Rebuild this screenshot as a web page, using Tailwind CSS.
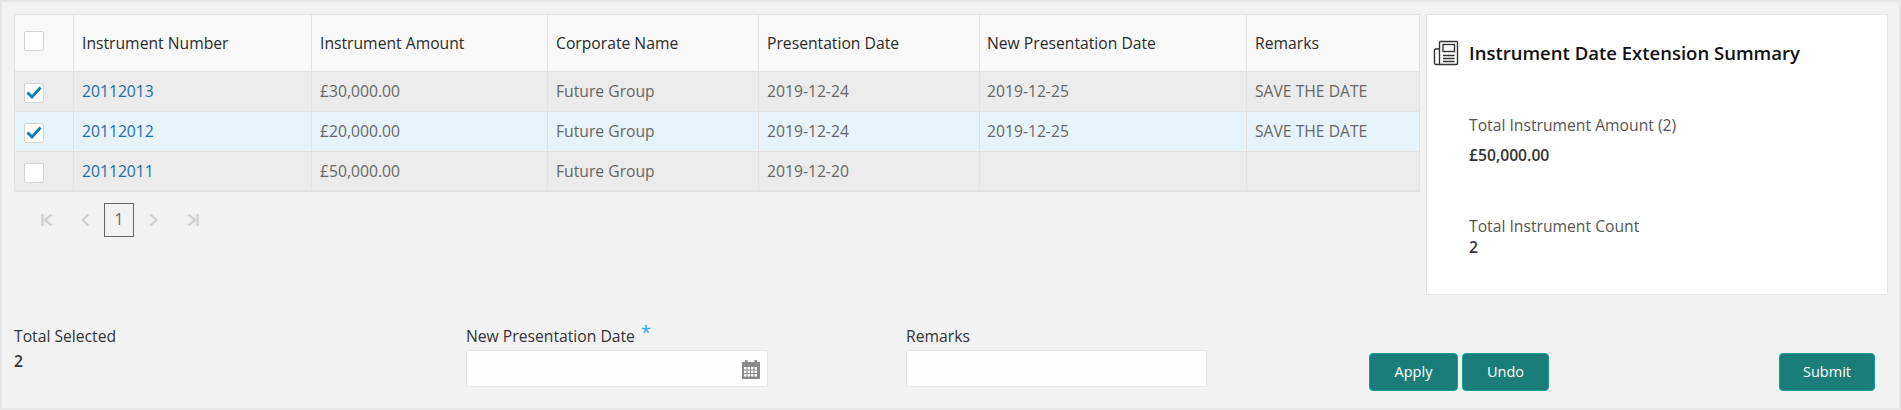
<!DOCTYPE html>
<html lang="en">
<head>
    <meta charset="UTF-8">
    <title>Instrument Date Extension</title>
    <script src="https://cdn.jsdelivr.net/npm/@tailwindcss/browser@4"></script>
</head>
<body class="bg-[#f2f2f2] font-['Open_Sans',sans-serif] text-[15.7px] overflow-hidden">
    <div class="h-[410px] w-[1901px] border-2 border-[#e6e6e6] pl-[12px] pt-[12px] flex flex-col">

        <div class="flex items-start gap-[6px]">
            <div class="w-[1406px]">
                <table class="w-full table-fixed border-collapse border-b-2 border-[#e2e2e2] text-[#666]">
                    <colgroup>
                        <col class="w-[59px]"><col class="w-[238px]"><col class="w-[236px]"><col class="w-[211px]"><col class="w-[221px]"><col class="w-[267px]"><col>
                    </colgroup>
                    <thead class="bg-[#f8f8f8] text-[#2a2a2a]">
                        <tr class="h-[57px]">
                            <th class="border border-[#e2e2e2] pl-[9px] align-top pt-[16px]"><span class="block w-[20px] h-[20px] bg-white border border-[#d4d4d4] rounded-[2px]"></span></th>
                            <th class="border border-[#e2e2e2] pl-[8px] pt-[2px] text-left font-normal">Instrument Number</th>
                            <th class="border border-[#e2e2e2] pl-[8px] pt-[2px] text-left font-normal">Instrument Amount</th>
                            <th class="border border-[#e2e2e2] pl-[8px] pt-[2px] text-left font-normal">Corporate Name</th>
                            <th class="border border-[#e2e2e2] pl-[8px] pt-[2px] text-left font-normal">Presentation Date</th>
                            <th class="border border-[#e2e2e2] pl-[7px] pt-[2px] text-left font-normal">New Presentation Date</th>
                            <th class="border border-[#e2e2e2] pl-[8px] pt-[2px] text-left font-normal">Remarks</th>
                        </tr>
                    </thead>
                    <tbody>
                        <tr class="h-[40px] bg-[#ebebeb]">
                            <td class="border border-[#e2e2e2] pl-[9px] pt-[2px]">
                                <span class="flex items-center justify-center w-[20px] h-[20px] bg-white border border-[#d4d4d4] rounded-[2px]">
                                    <svg width="16" height="13" viewBox="0 0 16 13"><path d="M1.5 6.5 L6 11 L14.5 1.5" fill="none" stroke="#0a7ac4" stroke-width="2.8"/></svg>
                                </span>
                            </td>
                            <td class="border border-[#e2e2e2] pl-[8px] text-[#1c6fa8]">20112013</td>
                            <td class="border border-[#e2e2e2] pl-[8px]">£30,000.00</td>
                            <td class="border border-[#e2e2e2] pl-[8px]">Future Group</td>
                            <td class="border border-[#e2e2e2] pl-[8px]">2019-12-24</td>
                            <td class="border border-[#e2e2e2] pl-[7px]">2019-12-25</td>
                            <td class="border border-[#e2e2e2] pl-[8px]">SAVE THE DATE</td>
                        </tr>
                        <tr class="h-[40px] bg-[#e7f3fa]">
                            <td class="border border-[#e2e2e2] pl-[9px] pt-[2px]">
                                <span class="flex items-center justify-center w-[20px] h-[20px] bg-white border border-[#d4d4d4] rounded-[2px]">
                                    <svg width="16" height="13" viewBox="0 0 16 13"><path d="M1.5 6.5 L6 11 L14.5 1.5" fill="none" stroke="#0a7ac4" stroke-width="2.8"/></svg>
                                </span>
                            </td>
                            <td class="border border-[#e2e2e2] pl-[8px] text-[#1c6fa8]">20112012</td>
                            <td class="border border-[#e2e2e2] pl-[8px]">£20,000.00</td>
                            <td class="border border-[#e2e2e2] pl-[8px]">Future Group</td>
                            <td class="border border-[#e2e2e2] pl-[8px]">2019-12-24</td>
                            <td class="border border-[#e2e2e2] pl-[7px]">2019-12-25</td>
                            <td class="border border-[#e2e2e2] pl-[8px]">SAVE THE DATE</td>
                        </tr>
                        <tr class="h-[39px] bg-[#ebebeb]">
                            <td class="border border-[#e2e2e2] pl-[9px] pt-[4px]">
                                <span class="block w-[20px] h-[20px] bg-white border border-[#d4d4d4] rounded-[2px]"></span>
                            </td>
                            <td class="border border-[#e2e2e2] pl-[8px] pt-[2px] text-[#1c6fa8]">20112011</td>
                            <td class="border border-[#e2e2e2] pl-[8px] pt-[2px]">£50,000.00</td>
                            <td class="border border-[#e2e2e2] pl-[8px] pt-[2px]">Future Group</td>
                            <td class="border border-[#e2e2e2] pl-[8px] pt-[2px]">2019-12-20</td>
                            <td class="border border-[#e2e2e2]"></td>
                            <td class="border border-[#e2e2e2]"></td>
                        </tr>
                    </tbody>
                </table>

                <!-- pagination -->
                <div class="flex items-center mt-[11px] pl-[27px] h-[34px]">
                    <svg width="12" height="12" viewBox="0 0 12 12" fill="none" stroke="#cfcfcf" stroke-width="2.2"><path d="M1.5 0V12M10.5 0.5L4 6L10.5 11.5"/></svg>
                    <svg class="ml-[28px]" width="9" height="12" viewBox="0 0 9 12" fill="none" stroke="#cfcfcf" stroke-width="2.2"><path d="M7.5 0.5L1.5 6L7.5 11.5"/></svg>
                    <span class="ml-[14px] w-[30px] h-[34px] flex items-center justify-center border border-[#666] text-[#666]">1</span>
                    <svg class="ml-[15px]" width="9" height="12" viewBox="0 0 9 12" fill="none" stroke="#cfcfcf" stroke-width="2.2"><path d="M1.5 0.5L7.5 6L1.5 11.5"/></svg>
                    <svg class="ml-[29px]" width="12" height="12" viewBox="0 0 12 12" fill="none" stroke="#cfcfcf" stroke-width="2.2"><path d="M10.5 0V12M1.5 0.5L8 6L1.5 11.5"/></svg>
                </div>
            </div>

            <!-- summary panel -->
            <div class="w-[462px] h-[281px] bg-white border border-[#e4e4e4] pl-[6px] pt-[24px]">
                <div class="flex items-center gap-[10px]">
                    <svg width="26" height="26" viewBox="0 0 26 26" fill="none" stroke="#333" stroke-width="1.4">
                        <path d="M6.5 24.5V2.5a1 1 0 0 1 1-1h16a1 1 0 0 1 1 1v21a1 1 0 0 1-1 1H3a1.5 1.5 0 0 1-1.5-1.5V10a1 1 0 0 1 1-1h4"/>
                        <rect x="10" y="4.5" width="11.5" height="7"/>
                        <path d="M10 15.5h11.5M10 18.5h11.5M10 21.5h11.5" stroke-width="1.6"/>
                    </svg>
                    <span class="font-semibold text-[18.5px] text-[#111]">Instrument Date Extension Summary</span>
                </div>
                <div class="pl-[36px] text-[#555]">
                    <div class="mt-[47px] leading-[22px]">Total Instrument Amount (2)</div>
                    <div class="mt-[8px] leading-[22px] font-semibold text-[#333]">£50,000.00</div>
                    <div class="mt-[49px] leading-[22px]">Total Instrument Count</div>
                    <div class="leading-[20px] font-semibold text-[#333]">2</div>
                </div>
            </div>
        </div>

        <!-- apply row -->
        <div class="flex items-start mt-[29px] text-[#333]">
            <div class="w-[452px] pt-[1px]">
                <div class="leading-[22px]">Total Selected</div>
                <div class="mt-[3px] leading-[22px] font-semibold">2</div>
            </div>
            <div class="w-[302px] mt-[1px]">
                <div class="leading-[22px] h-[25px]">New Presentation Date <span class="text-[#29a9e0] text-[18px] leading-none ml-[2px] relative -top-[3px]">*</span></div>
                <div class="relative h-[37px] bg-[#fdfdfd] border border-[#e6e6e6] rounded-[2px]">
                    <svg class="absolute right-[6px] top-[9px]" width="20" height="20" viewBox="0 0 20 20" fill="#8a8a8a">
                        <rect x="4" y="0" width="2.5" height="4"/><rect x="13.5" y="0" width="2.5" height="4"/>
                        <path fill-rule="evenodd" d="M1 2h18v17H1z M3 7v2.5h2.5V7z M6.5 7v2.5H9V7z M10 7v2.5h2.5V7z M13.5 7v2.5H16V7z M3 10.5V13h2.5v-2.5z M6.5 10.5V13H9v-2.5z M10 10.5V13h2.5v-2.5z M13.5 10.5V13H16v-2.5z M3 14v2.5h2.5V14z M6.5 14v2.5H9V14z M10 14v2.5h2.5V14z M13.5 14v2.5H16V14z"/>
                    </svg>
                </div>
            </div>
            <div class="w-[301px] ml-[138px] mt-[1px]">
                <div class="leading-[22px] h-[25px]">Remarks</div>
                <div class="h-[37px] bg-[#fdfdfd] border border-[#e6e6e6] rounded-[2px]"></div>
            </div>
            <div class="flex flex-1 items-start pt-[29px] pl-[162px] pr-[24px]">
                <button class="w-[89px] h-[38px] bg-[#1b7d79] border border-[#14a098] rounded-[4px] text-white text-[14.5px]">Apply</button>
                <button class="ml-[4px] w-[87px] h-[38px] bg-[#1b7d79] border border-[#14a098] rounded-[4px] text-white text-[14.5px]">Undo</button>
                <button class="ml-auto w-[96px] h-[38px] bg-[#1b7d79] border border-[#14a098] rounded-[4px] text-white text-[14.5px]">Submit</button>
            </div>
        </div>
    </div>
</body>
</html>
